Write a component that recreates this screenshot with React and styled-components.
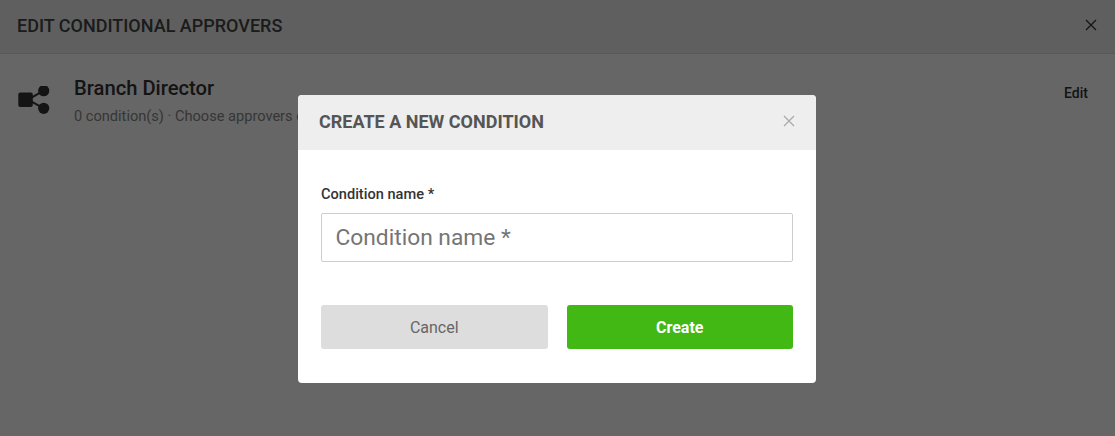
import styled, { createGlobalStyle } from "styled-components";

const GlobalStyle = createGlobalStyle`
  html, body {
    margin: 0;
    padding: 0;
    height: 100%;
    background: #fff;
    font-family: Roboto, "Liberation Sans", sans-serif;
    overflow: hidden;
  }
  * {
    box-sizing: border-box;
  }
`

const Page = styled.div`
  width: 100%;
  height: 100vh;
  background: #fff;
`

const PageHeader = styled.header`
  display: flex;
  align-items: center;
  justify-content: space-between;
  height: 54px;
  padding: 0 18px 3px 17px;
  background: #eee;
  border-bottom: 1px solid #ddd;
`

const PageTitle = styled.h1`
  margin: 0;
  font-size: 18px;
  font-weight: 500;
  color: #444;
`

const CloseButton = styled.button`
  display: flex;
  padding: 0;
  border: 0;
  background: transparent;
  color: ${props => props.color};
  cursor: pointer;
`

const ApproverRow = styled.div`
  display: flex;
  align-items: flex-start;
  padding: 23px 27px 0 18px;
`

const ApproverIcon = styled.svg`
  width: 32px;
  height: 32px;
  margin-top: 9px;
  margin-right: 24px;
  flex-shrink: 0;
`

const ApproverInfo = styled.div`
  flex: 1;
`

const ApproverName = styled.div`
  font-size: 20.2px;
  font-weight: 500;
  line-height: 22px;
  color: #333;
`

const ApproverMeta = styled.div`
  margin-top: 7px;
  font-size: 14.6px;
  line-height: 20px;
  color: #888;
`

const EditLink = styled.a`
  margin-top: 6px;
  font-size: 14px;
  font-weight: 500;
  line-height: 20px;
  color: #333;
  cursor: pointer;
`

const Overlay = styled.div`
  position: fixed;
  inset: 0;
  display: flex;
  justify-content: center;
  align-items: flex-start;
  padding: 95px 1px 0 0;
  background: rgba(0, 0, 0, 0.6);
`

const Modal = styled.div`
  width: 518px;
  height: 288px;
  background: #fff;
  border-radius: 4px;
  overflow: hidden;
`

const ModalHeader = styled.div`
  display: flex;
  align-items: center;
  justify-content: space-between;
  height: 55px;
  padding: 0 21px 3px 21px;
  background: #eee;
`

const ModalTitle = styled.h2`
  margin: 0;
  font-size: 18px;
  font-weight: 700;
  color: #555;
`

const ModalBody = styled.div`
  padding: 35px 23px 0;
`

const FieldLabel = styled.label`
  display: block;
  margin-bottom: 9px;
  font-size: 14.6px;
  font-weight: 500;
  line-height: 19px;
  color: #333;
`

const TextInput = styled.input`
  display: block;
  width: 100%;
  height: 49px;
  padding: 0 14px 0 13.5px;
  border: 1px solid #ccc;
  border-radius: 2px;
  outline: none;
  font-family: inherit;
  font-size: 22.75px;
  color: #333;

  &::placeholder {
    color: #757575;
    opacity: 1;
  }
`

const Actions = styled.div`
  display: flex;
  gap: 19px;
  margin-top: 43px;
`

const ActionButton = styled.button`
  flex: 1;
  height: 44px;
  border: 0;
  border-radius: 3px;
  font-family: inherit;
  font-size: 16px;
  font-weight: ${props => props.$primary ? 700 : 400};
  background: ${props => props.$primary ? "#41b813" : "#ddd"};
  color: ${props => props.$primary ? "#fff" : "#666"};
  cursor: pointer;
`

function CloseIcon({size}) {
    return (
        <svg width={size} height={size} viewBox="0 0 12 12" fill="none" stroke="currentColor" strokeWidth="1.3">
            <path d="M1 1L11 11M11 1L1 11"/>
        </svg>
    );
}

export default function App() {
    return (
        <>
            <GlobalStyle/>
            <Page>
                <PageHeader>
                    <PageTitle>EDIT CONDITIONAL APPROVERS</PageTitle>
                    <CloseButton color="#333"><CloseIcon size={12}/></CloseButton>
                </PageHeader>
                <ApproverRow>
                    <ApproverIcon viewBox="0 0 32 32">
                        <rect x="0.3" y="6.5" width="14.5" height="14.5" rx="2" fill="#333"/>
                        <path d="M10 13.7L25.7 4.7M10 13.7L25.7 22.3" stroke="#333" strokeWidth="2" fill="none"/>
                        <circle cx="25.7" cy="4.7" r="5.6" fill="#333"/>
                        <circle cx="25.7" cy="22.3" r="5.6" fill="#333"/>
                    </ApproverIcon>
                    <ApproverInfo>
                        <ApproverName>Branch Director</ApproverName>
                        <ApproverMeta>0 condition(s) · Choose approvers conditionally</ApproverMeta>
                    </ApproverInfo>
                    <EditLink>Edit</EditLink>
                </ApproverRow>
            </Page>
            <Overlay>
                <Modal>
                    <ModalHeader>
                        <ModalTitle>CREATE A NEW CONDITION</ModalTitle>
                        <CloseButton color="#aaa"><CloseIcon size={12}/></CloseButton>
                    </ModalHeader>
                    <ModalBody>
                        <FieldLabel>Condition name *</FieldLabel>
                        <TextInput placeholder="Condition name *"/>
                        <Actions>
                            <ActionButton>Cancel</ActionButton>
                            <ActionButton $primary>Create</ActionButton>
                        </Actions>
                    </ModalBody>
                </Modal>
            </Overlay>
        </>
    );
}
